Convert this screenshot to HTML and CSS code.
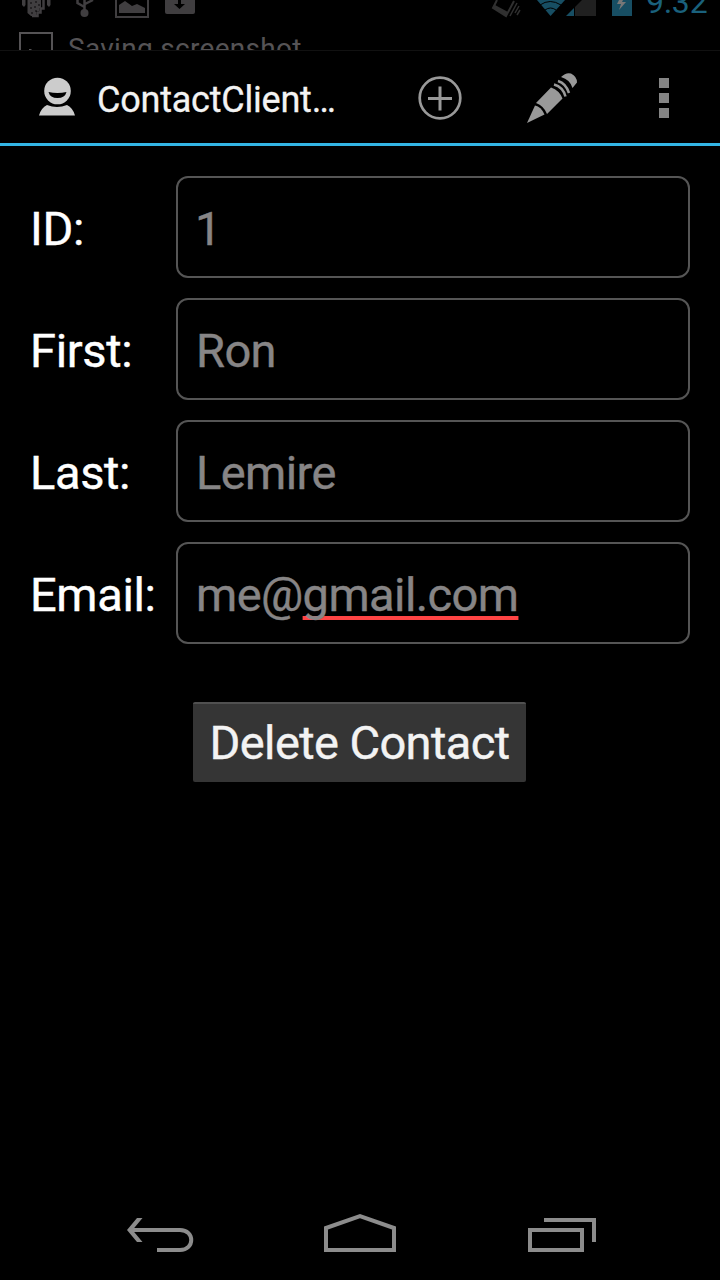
FILE: index.html
```html
<!DOCTYPE html>
<html lang="en">
<head>
<meta charset="utf-8">
<title>ContactClient</title>
<link rel="stylesheet" href="styles.css">
</head>
<body>
<div class="screen">
  <div class="status">
    <div class="status-row">
      <svg class="status-left" width="200" height="20" viewBox="0 0 200 20">
        <g fill="#403e40">
          <path d="M22 0h3.500v5l-1.500 2-2-2zM47 0h3.500v5l-1.500 2-2-2z"/>
          <path d="M27.500 0H41v8h-2v3h-3v5h-5l-3.500-3z"/>
          <path d="M43.500 0v8.500h-3v4h-3V16H32" fill="none" stroke="#403e40" stroke-width="2.500"/>
          <circle cx="84.500" cy="13" r="4"/>
          <path d="M84.500 0v12M77.500 0v3l7 4M93 0l-8 4" fill="none" stroke="#403e40" stroke-width="2.500"/>
          <path d="M116 0v17h32V0" fill="none" stroke="#403e40" stroke-width="2"/>
          <path d="M119 13V5l6-4 7 5 5-2 8 4v5z"/>
          <path d="M165 0h30v12q0 2-2 2h-26q-2 0-2-2z"/>
        </g>
        <g fill="#000">
          <path d="M178 0h3v4h4l-5.500 5-5.500-5h4z"/>
          <circle cx="31" cy="3" r=".8"/><circle cx="36" cy="2" r=".8"/><circle cx="39" cy="5" r=".8"/><circle cx="31" cy="8" r=".8"/><circle cx="35" cy="7" r=".8"/><circle cx="32" cy="13" r=".8"/><circle cx="36" cy="11" r=".8"/>
        </g>
      </svg>
      <svg class="status-right" width="150" height="20" viewBox="490 0 150 20">
        <path d="M497 0l-4 8 13 8 8-15" fill="none" stroke="#303030" stroke-width="2"/>
        <path d="M493 8l13 8 2-4-13-7z" fill="#303030"/>
        <path d="M517 3l-7 13M519 6l-4 7M520 10l-3 5" stroke="#303030" stroke-width="1.500"/>
        <path d="M537 0h28l-14.500 16z" fill="#174e63"/>
        <path d="M540 5q10-7 21 0M545 10q5.500-4 11 0" fill="none" stroke="#000" stroke-width="1"/>
        <path d="M574 8v8h-8z" fill="#174e63"/>
        <path d="M575 7l7-7h14v16h-21z" fill="#202020"/>
        <path d="M612 0h20v16h-20z" fill="#174e63"/>
        <path d="M619 0l-2 4h4l-2 6 7-8h-4l1-2z" fill="#777"/>
      </svg>
      <span class="clock">9:32</span>
    </div>
    <div class="ticker">
      <svg class="ticker-icon" width="34" height="26" viewBox="0 0 34 26"><path d="M1 26V1h32v25" fill="none" stroke="#555355" stroke-width="2"/><path d="M10 17h2l1 1h-3z" fill="#555355"/></svg>
      <span class="ticker-text">Saving screenshot</span>
    </div>
  </div>
  <header class="bar">
    <svg class="person" width="38" height="42" viewBox="0 0 38 42">
      <circle cx="19.500" cy="15" r="13.300" fill="#ccc"/>
      <path d="M10.500 16q9 2 18 0-1.500 6-9 6t-9-6z" fill="#000"/>
      <path d="M1 39.500Q3 32 9 29q10 4 20 0 6 3 8 10.500z" fill="#ccc"/>
    </svg>
    <h1 class="title">ContactClient…</h1>
    <svg class="add" width="44" height="44" viewBox="0 0 44 44" fill="none" stroke="#999"><circle cx="22" cy="22" r="20.300" stroke-width="2.700"/><path d="M10 22.500h24M22 10.500v24" stroke-width="3"/></svg>
    <svg class="edit" width="52" height="52" viewBox="0 0 52 52">
      <path d="M0 51L8 33.500q6 1 9.500 9z" fill="#999"/>
      <path d="M9 31L24 15.500q8.500 3 11.500 11L20 42q-3-8-11-11z" fill="#999"/>
      <path d="M27 12.500q9 2.500 11.500 12M31 9q8 2.500 11 12" fill="none" stroke="#999" stroke-width="2.500"/>
      <path d="M34 5q5-5 10-3.500 6 3 6 9l-4.500 5.500Q43 7.500 34 5z" fill="#999"/>
    </svg>
    <div class="overflow"><i class="dot"></i><i class="dot"></i><i class="dot"></i></div>
  </header>
  <main class="form">
    <label class="row"><span class="label">ID:</span><span class="field one">1</span></label>
    <label class="row"><span class="label">First:</span><span class="field">Ron</span></label>
    <label class="row"><span class="label">Last:</span><span class="field">Lemire</span></label>
    <label class="row"><span class="label">Email:</span><span class="field"><span>me@</span><span class="misspelt">gmail.com</span></span></label>
    <button class="delete">Delete Contact</button>
  </main>
  <nav class="nav">
    <svg width="720" height="96" viewBox="0 1184 720 96" fill="none" stroke="#8c8c8c" stroke-width="4">
      <path d="M131 1230h49c15 0 15 20 0 20h-23"/>
      <path d="M137 1218h5.500L132.500 1230l10 12H137l-10-12z" fill="#8c8c8c" stroke="none"/>
      <path d="M326 1250v-22l34-12 34 12v22z"/>
      <path d="M530 1230h52v20h-52zM544 1220h50v22"/>
    </svg>
  </nav>
</div>
</body>
</html>
```
FILE: styles.css
```css
body { margin: 0; background: #000; }
.screen { width: 720px; height: 1280px; background: #000; display: flex; flex-direction: column; font-family: Roboto, sans-serif; overflow: hidden; }
svg { display: block; flex: none; }
.status { height: 50px; flex: none; overflow: hidden; border-bottom: 1px solid #111; }
.status-row { height: 32px; display: flex; align-items: flex-start; }
.status-right { margin-left: 290px; }
.clock { margin: -17px 0 0 6px; font-size: 32px; line-height: 38px; color: #1a617c; white-space: nowrap; }
.ticker { display: flex; padding-left: 19px; }
.ticker-text { margin-left: 15px; font-size: 28px; line-height: 34px; letter-spacing: 0.3px; color: #555355; white-space: nowrap; }
.bar { height: 92px; flex: none; border-bottom: 3px solid #33b5e5; display: flex; align-items: flex-start; }
.person { margin: 25px 0 0 38px; }
.title { margin: 28px 0 0 21px; width: 240px; font-size: 36px; line-height: 42px; font-weight: 400; letter-spacing: -0.22px; color: #f3f3f3; white-space: nowrap; -webkit-text-stroke: 0.3px; }
.add { margin: 25px 0 0 81px; }
.edit { margin: 21px 0 0 65px; }
.overflow { margin: 27px 0 0 80px; display: grid; gap: 5px; }
.dot { width: 10px; height: 10px; background: #858585; }
.form { flex: 1; padding: 30px 30px 0; display: flex; flex-direction: column; gap: 20px; }
.row { display: flex; align-items: center; height: 102px; font-size: 47px; line-height: 56px; color: #fff; white-space: nowrap; -webkit-text-stroke: 0.4px; }
.label { width: 146px; flex: none; padding-top: 4px; box-sizing: border-box; letter-spacing: -0.35px; }
.field { flex: 1; box-sizing: border-box; height: 102px; padding: 23px 18px; border: 2px solid #555; border-radius: 12px; color: #878586; letter-spacing: -0.58px; }
.one { padding-left: 17px; }
.misspelt { text-decoration: underline #ff4444 4px; text-underline-offset: 5px; text-decoration-skip-ink: none; }
.delete { align-self: center; margin: 38px 1px 0 0; width: 333px; height: 80px; padding: 0; border: 0; border-top: 2px solid #505050; border-radius: 2px; background: #353535; color: #f3f3f3; font: 47px/78px Roboto, sans-serif; letter-spacing: -0.6px; white-space: nowrap; -webkit-text-stroke: 0.4px; }
.nav { height: 96px; flex: none; }
```
